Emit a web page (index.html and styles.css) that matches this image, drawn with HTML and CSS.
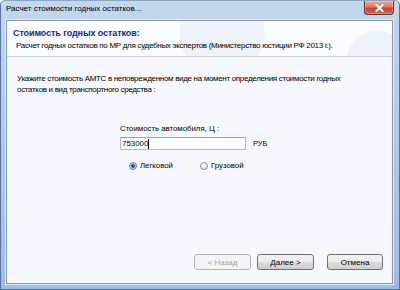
FILE: index.html
```html
<!DOCTYPE html>
<html>
<head>
<meta charset="utf-8">
<link rel="stylesheet" href="styles.css">
</head>
<body>
<div class="window">
  <div class="titlebar">
    <span class="title">Расчет стоимости годных остатков...</span>
    <span class="close"><svg width="9" height="8" viewBox="0 0 9 8"><path d="M1.5 1 L7.5 7 M7.5 1 L1.5 7" stroke="#fff" stroke-width="2" stroke-linecap="square"/></svg></span>
  </div>
  <div class="client">
    <div class="header">
      <div class="h-title">Стоимость годных остатков:</div>
      <div class="h-sub">Расчет годных остатков по МР для судебных экспертов (Министерство юстиции РФ 2013 г.).</div>
    </div>
    <div class="content">
      <p class="intro">Укажите стоимость АМТС в неповрежденном виде на момент определения стоимости годных<br>остатков и вид транспортного средства :</p>
      <div class="form">
        <div class="label">Стоимость автомобиля, Ц :</div>
        <div class="input-row">
          <div class="input">753000<span class="caret"></span></div>
          <span class="unit">РУБ</span>
        </div>
        <div class="radios">
          <label class="radio first"><span class="dot on"></span>Легковой</label>
          <label class="radio"><span class="dot"></span>Грузовой</label>
        </div>
      </div>
    </div>
    <div class="buttons">
      <button class="btn disabled">&lt; Назад</button>
      <button class="btn">Далее &gt;</button>
      <button class="btn cancel">Отмена</button>
    </div>
  </div>
</div>
</body>
</html>
```
FILE: styles.css
```css
* { box-sizing: border-box; }
html, body { margin: 0; padding: 0; }
body {
  width: 400px; height: 290px; overflow: hidden;
  font-family: "Liberation Sans", Arial, sans-serif;
  font-size: 8px; color: #000;
}
.window {
  width: 400px; height: 290px;
  display: flex; flex-direction: column;
  padding: 0 6px 5px 5px;
  background: linear-gradient(180deg, #c3d7ed 0%, #b6cde7 30%, #abc4e2 70%, #a0bcdc 100%);
  border: 1px solid #56759f;
  border-top-color: #8aa5c8;
  border-radius: 5px 5px 0 0;
}
.titlebar {
  height: 19px; display: flex; align-items: flex-start; justify-content: space-between;
}
.title {
  padding: 2px 0 0 0; font-size: 8px; line-height: 12px; color: #000;
}
.close {
  width: 30px; height: 14px; margin-right: -1px;
  display: flex; align-items: center; justify-content: center;
  background: linear-gradient(180deg, #eaa896 0%, #d97b63 45%, #c5452a 55%, #d0684a 100%);
  border: 1px solid #6e2a20; border-top: none;
  border-radius: 0 0 4px 4px;
  box-shadow: inset 0 0 0 1px rgba(255,255,255,0.3);
}
.client {
  flex: 1; display: flex; flex-direction: column;
  background: #f7f8fd;
  border: 1px solid #7f99bd;
  box-shadow: 0 0 0 1px #e4edf7;
}
.header {
  height: 36px; flex: none;
  padding: 5px 0 0 6px;
  background: radial-gradient(circle at 215px 12px, #eef2f9 0 42px, transparent 43px),
              radial-gradient(circle at 370px 40px, #eef2f9 0 30px, transparent 31px),
              #fbfcfe;
  border-bottom: 1px solid #c5d1e2;
}
.h-title {
  font-weight: bold; font-size: 9px; letter-spacing: -0.1px; color: #16298a; line-height: 14px;
}
.h-sub { padding-left: 3px; line-height: 12px; letter-spacing: -0.3px; }
.content { flex: 1; padding: 16px 0 0 10px; }
.intro { margin: 0; line-height: 11px; letter-spacing: -0.32px; }
.form { margin: 28px 0 0 103px; }
.label { line-height: 12px; font-size: 7.8px; }
.input-row { display: flex; align-items: center; margin-top: 2px; }
.input {
  width: 126px; height: 13px; background: #fff;
  border: 1px solid #a9bcd6; border-top-color: #8ea4c4;
  line-height: 11px; padding-left: 1px; font-size: 7.9px;
  display: flex; align-items: center;
}
.caret { width: 1px; height: 10px; background: #000; }
.unit { margin-left: 7px; font-size: 7.4px; }
.radios { display: flex; margin: 11px 0 0 9px; }
.radio { display: flex; align-items: center; line-height: 10px; font-size: 7.8px; }
.radio.first { width: 71px; }
.dot {
  width: 8px; height: 8px; border-radius: 50%; margin-right: 3px; flex: none;
  border: 1px solid #8e8f8f;
  background: radial-gradient(circle at 40% 35%, #ffffff, #d6d6d6);
}
.dot.on {
  background: radial-gradient(circle, #1d5fa8 0 1.5px, #8fb7e0 2px, #eef3f8 3.5px);
  border-color: #6d7d8e;
}
.buttons { display: flex; justify-content: flex-end; padding: 0 9px 13px 0; }
.btn {
  width: 57px; height: 16px; margin-left: 6px; padding: 0;
  font-family: "Liberation Sans", Arial, sans-serif; font-size: 8px; color: #000;
  border: 1px solid #707070; border-radius: 3px;
  background: linear-gradient(180deg, #f2f2f2 0%, #ebebeb 50%, #dddddd 51%, #cfcfcf 100%);
}
.btn.disabled { color: #a5a5a5; border-color: #b5b5b5; background: #f4f4f4; }
.btn.cancel { margin-left: 13px; width: 56px; }
```
